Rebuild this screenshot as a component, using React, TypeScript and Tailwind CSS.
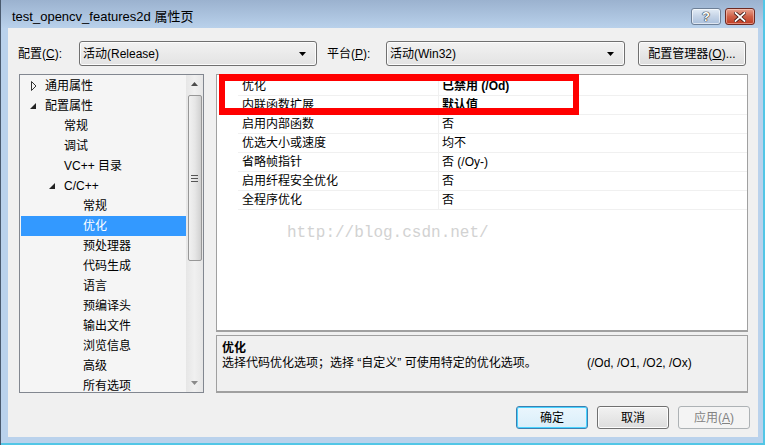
import React from "react";

type TreeRow = { t: string; lvl: 0 | 1 | 2; tri?: "open" | "closed"; sel?: boolean };

const treeRows: TreeRow[] = [
  { t: "通用属性", lvl: 0, tri: "closed" },
  { t: "配置属性", lvl: 0, tri: "open" },
  { t: "常规", lvl: 1 },
  { t: "调试", lvl: 1 },
  { t: "VC++ 目录", lvl: 1 },
  { t: "C/C++", lvl: 1, tri: "open" },
  { t: "常规", lvl: 2 },
  { t: "优化", lvl: 2, sel: true },
  { t: "预处理器", lvl: 2 },
  { t: "代码生成", lvl: 2 },
  { t: "语言", lvl: 2 },
  { t: "预编译头", lvl: 2 },
  { t: "输出文件", lvl: 2 },
  { t: "浏览信息", lvl: 2 },
  { t: "高级", lvl: 2 },
  { t: "所有选项", lvl: 2 },
];

const indent: Record<number, string> = {
  0: "pl-[24px]",
  1: "pl-[43px]",
  2: "pl-[62px]",
};

const gridRows: { n: string; v: string; b?: boolean }[] = [
  { n: "优化", v: "已禁用 (/Od)", b: true },
  { n: "内联函数扩展", v: "默认值", b: true },
  { n: "启用内部函数", v: "否" },
  { n: "优选大小或速度", v: "均不" },
  { n: "省略帧指针", v: "否 (/Oy-)" },
  { n: "启用纤程安全优化", v: "否" },
  { n: "全程序优化", v: "否" },
];

function Triangle({ kind }: { kind: "open" | "closed" }) {
  if (kind === "closed") {
    return (
      <svg width="6" height="10" viewBox="0 0 6 10" className="absolute left-[-14px] top-[5px]">
        <path d="M0.5 0.5 L5 5 L0.5 9.5 Z" fill="none" stroke="#333" strokeWidth="1" />
      </svg>
    );
  }
  return (
    <svg width="6" height="6" viewBox="0 0 6 6" className="absolute left-[-15px] top-[7px]">
      <path d="M6 0 L6 6 L0 6 Z" fill="#222" />
    </svg>
  );
}

function Select({ text, w }: { text: string; w: string }) {
  return (
    <div
      className={`${w} h-[25px] rounded-[3px] border border-[#707070] bg-gradient-to-b from-[#f2f2f2] to-[#e3e3e3] flex items-center pl-[3px] pr-[10px] shadow-[inset_0_0_0_1px_#fcfcfc]`}
    >
      <span className="flex-1 leading-[14px]">{text}</span>
      <svg width="7" height="4" viewBox="0 0 7 4">
        <path d="M0 0 L7 0 L3.5 4 Z" fill="#000" />
      </svg>
    </div>
  );
}

export default function App() {
  return (
    <div className="w-[765px] h-[445px] overflow-hidden flex flex-col bg-[#bad2ec] text-[12px] text-black font-[Liberation_Sans,Noto_Sans_CJK_SC,sans-serif] border-l border-l-[#4a5a6e] border-r-2 border-r-[#52c6e6]">
      {/* title bar */}
      <div className="h-[28px] shrink-0 flex items-start bg-gradient-to-b from-[#9bb2cf] to-[#b9d1eb]">
        <span className="ml-[11px] mt-[10px] leading-[14px] text-[13px]">test_opencv_features2d 属性页</span>
        <div className="ml-auto mr-[8px] mt-[8px] flex gap-[4px]">
          <div className="w-[30px] h-[17px] rounded-[3px] border border-[#6d7f96] bg-gradient-to-b from-[#e3ecf6] via-[#c4d3e6] to-[#aac0dc] flex items-center justify-center shadow-[inset_0_0_0_1px_rgba(255,255,255,0.6)]">
            <span className="text-white font-bold text-[13px] leading-[13px] [text-shadow:0_0_1px_#222,0_0_1px_#222,0_0_1px_#222]">?</span>
          </div>
          <div className="w-[30px] h-[17px] rounded-[3px] border border-[#6e2a22] bg-gradient-to-b from-[#e7a290] via-[#cf6148] to-[#bf3a22] flex items-center justify-center shadow-[inset_0_0_0_1px_rgba(255,220,210,0.5)]">
            <svg width="12" height="10" viewBox="0 0 12 10">
              <path d="M1.5 1 L10.5 9 M10.5 1 L1.5 9" stroke="#3b1410" strokeWidth="3.4" strokeLinecap="square" />
              <path d="M1.5 1 L10.5 9 M10.5 1 L1.5 9" stroke="#fff" strokeWidth="1.8" strokeLinecap="square" />
            </svg>
          </div>
        </div>
      </div>

      {/* client */}
      <div className="ml-[7px] mr-[5px] h-[409px] shrink-0 bg-[#f0f0f0] flex flex-col">
        {/* toolbar */}
        <div className="mt-[13px] h-[25px] flex items-center">
          <span className="w-[71px] pl-[10px]">
            配置(<span className="underline">C</span>):
          </span>
          <Select text="活动(Release)" w="w-[238px]" />
          <span className="w-[59px] ml-[10px]">
            平台(<span className="underline">P</span>):
          </span>
          <Select text="活动(Win32)" w="w-[239px]" />
          <div className="ml-[13px] w-[108px] h-[25px] rounded-[3px] border border-[#707070] bg-gradient-to-b from-[#f2f2f2] to-[#dddddd] flex items-center justify-center shadow-[inset_0_0_0_1px_#fcfcfc]">
            配置管理器(<span className="underline">O</span>)...
          </div>
        </div>

        {/* panels */}
        <div className="mt-[8px] h-[319px] flex">
          {/* tree */}
          <div className="ml-[11px] w-[185px] h-full border border-[#828790] bg-[#f5f5f5] flex">
            <div className="flex-1 pt-[1px] pl-[1px]">
              {treeRows.map((r, i) => (
                <div
                  key={i}
                  className={`h-[20px] flex items-center ${indent[r.lvl]} ${r.sel ? "bg-[#3399ff] text-white" : ""}`}
                >
                  <span className="relative leading-[20px]">
                    {r.tri && <Triangle kind={r.tri} />}
                    {r.t}
                  </span>
                </div>
              ))}
            </div>
            <div className="w-[17px] h-full bg-gradient-to-r from-[#e6e6e6] via-[#f0f0f0] to-[#e6e6e6] flex flex-col items-center">
              <div className="h-[18px] w-full flex items-center justify-center">
                <svg width="7" height="4" viewBox="0 0 7 4">
                  <path d="M0 4 L7 4 L3.5 0 Z" fill="#4d4d4d" />
                </svg>
              </div>
              <div className="mt-[2px] w-[14px] h-[166px] rounded-[2px] border border-[#979797] bg-gradient-to-r from-[#f1f1f1] via-[#e6e6e6] to-[#d0d0d0] flex items-center justify-center">
                <svg width="7" height="7" viewBox="0 0 7 7">
                  <path d="M0 0.5 H7 M0 3.5 H7 M0 6.5 H7" stroke="#555" strokeWidth="1" />
                </svg>
              </div>
              <div className="mt-auto h-[18px] w-full flex items-center justify-center">
                <svg width="7" height="4" viewBox="0 0 7 4">
                  <path d="M0 0 L7 0 L3.5 4 Z" fill="#8a8a8a" />
                </svg>
              </div>
            </div>
          </div>

          {/* right */}
          <div className="ml-[12px] w-[532px] h-full flex flex-col">
            <div className="relative h-[258px] border border-[#a0a0a0] border-b-2 bg-white pt-[2px]">
              {gridRows.map((r, i) => (
                <div key={i} className="h-[19px] flex">
                  <div className="w-[21px] shrink-0" />
                  <div className="w-[200px] shrink-0 border-b border-[#f0f0f0] pl-[4px] leading-[18px]">{r.n}</div>
                  <div className={`flex-1 border-b border-l border-[#f0f0f0] pl-[3px] leading-[18px] ${r.b ? "font-bold" : ""}`}>
                    {r.v}
                  </div>
                </div>
              ))}
              <div className="absolute left-[2px] top-[-1px] w-[360px] h-[41px] border-x-[6px] border-y-[7px] border-[#ff0000]" />
              <div className="absolute left-[70px] top-[148px] text-[16px] leading-[20px] text-[#d2d2d2] font-[Liberation_Mono,monospace]">
                http://blog.csdn.net/
              </div>
            </div>
            <div className="mt-[3px] h-[58px] border border-[#a0a0a0] border-b-2 bg-[#f0f0f0] pl-[5px] pt-[5px]">
              <div className="font-bold leading-[15px]">优化</div>
              <div className="flex leading-[15px]">
                <span className="w-[365px] shrink-0">选择代码优化选项；选择 “自定义” 可使用特定的优化选项。</span>
                <span>(/Od, /O1, /O2, /Ox)</span>
              </div>
            </div>
          </div>
        </div>

        {/* buttons */}
        <div className="mt-[13px] h-[23px] flex justify-end gap-[9px] pr-[8px]">
          <div className="w-[72px] h-[23px] rounded-[3px] border border-[#3c7fb1] bg-gradient-to-b from-[#eaf6fd] to-[#d9eefa] flex items-center justify-center shadow-[inset_0_0_0_1px_#48d3ff]">
            确定
          </div>
          <div className="w-[72px] h-[23px] rounded-[3px] border border-[#707070] bg-gradient-to-b from-[#f2f2f2] to-[#dddddd] flex items-center justify-center shadow-[inset_0_0_0_1px_#fcfcfc]">
            取消
          </div>
          <div className="w-[72px] h-[23px] rounded-[3px] border border-[#adb2b5] bg-[#f4f4f4] text-[#838383] flex items-center justify-center">
            应用(<span className="underline">A</span>)
          </div>
        </div>
      </div>
      <div className="flex-1 border-b-2 border-b-[#52c6e6]" />
    </div>
  );
}
